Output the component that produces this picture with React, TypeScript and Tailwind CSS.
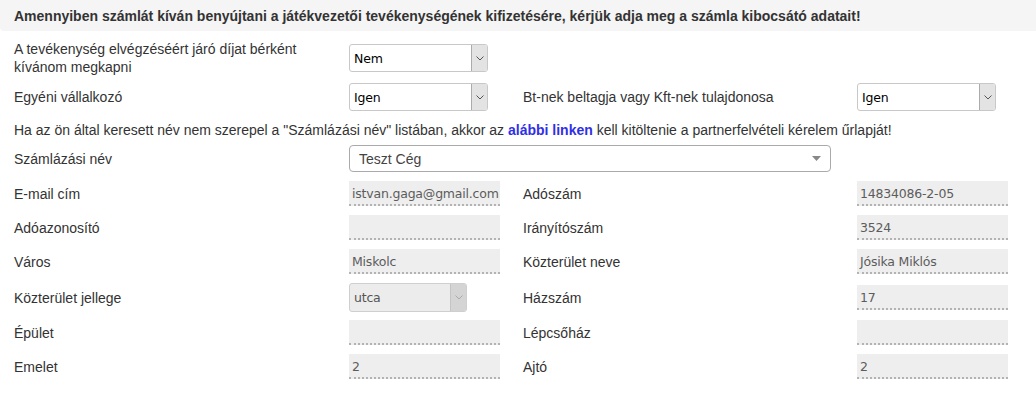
import React from "react";

const GRID = "grid grid-cols-[335px_174px_334px_1fr] items-center";

function Chevron({ color = "#555" }: { color?: string }) {
  return (
    <svg width="8" height="5" viewBox="0 0 8 5" fill="none">
      <path d="M0.5 0.5 L4 4 L7.5 0.5" stroke={color} strokeWidth="1" />
    </svg>
  );
}

function Sel({ value, w = "w-[139px]" }: { value: string; w?: string }) {
  return (
    <div
      className={`${w} h-[28px] flex items-stretch bg-white border border-[#c8c8c8] rounded-[3px] overflow-hidden`}
    >
      <div className="flex-1 flex items-center pl-[4px] pt-[1px] text-[12.5px] text-black font-['DejaVu_Sans',sans-serif] tracking-[-0.2px]">
        {value}
      </div>
      <div className="w-[16px] flex items-center justify-center bg-[#e3e3e3] border-l border-[#ababab]">
        <Chevron />
      </div>
    </div>
  );
}

function DisabledSel({ value }: { value: string }) {
  return (
    <div className="w-[118px] h-[29px] flex items-stretch bg-[#ececec] border border-[#cfcfcf] rounded-[3px] overflow-hidden">
      <div className="flex-1 flex items-center pl-[4px] pt-[1px] text-[12.5px] text-[#555] font-['DejaVu_Sans',sans-serif] tracking-[-0.2px]">
        {value}
      </div>
      <div className="w-[16px] flex items-center justify-center bg-[#d4d4d4] border-l border-[#c4c4c4]">
        <Chevron color="#aaa" />
      </div>
    </div>
  );
}

function RO({ value }: { value?: string }) {
  return (
    <div className="w-[151px] h-[25px] bg-[#eeeeee] border-b-2 border-dotted border-[#b3b3b3] flex items-center pl-[3px] pt-[2px] text-[12.5px] tracking-[-0.2px] text-[#5c5c5c] font-['DejaVu_Sans',sans-serif] whitespace-nowrap overflow-hidden">
      {value}
    </div>
  );
}

function Row({
  l1,
  v1,
  l2,
  v2,
  mt = "mt-[9px]",
  h = "h-[25px]",
}: {
  l1: string;
  v1: React.ReactNode;
  l2: string;
  v2: React.ReactNode;
  mt?: string;
  h?: string;
}) {
  return (
    <div className={`${GRID} ${mt} ${h}`}>
      <div>{l1}</div>
      <div>{v1}</div>
      <div>{l2}</div>
      <div>{v2}</div>
    </div>
  );
}

export default function App() {
  return (
    <div className="w-[1036px] h-[410px] bg-white font-['Liberation_Sans',Arial,sans-serif] text-[14px] text-[#333] leading-[18px]">
      <div className="h-[31px] bg-[#f5f5f5] rounded-bl-[4px] flex items-center pl-[14px] pt-[1px] font-bold">
        Amennyiben számlát kíván benyújtani a játékvezetői tevékenységének kifizetésére, kérjük adja meg a számla kibocsátó adatait!
      </div>
      <div className="pl-[14px]">
        <div className={`${GRID} mt-[9px] h-[36px]`}>
          <div className="leading-[18px]">
            A tevékenység elvégzéséért járó díjat bérként
            <br />
            kívánom megkapni
          </div>
          <div>
            <Sel value="Nem" />
          </div>
          <div />
          <div />
        </div>
        <div className={`${GRID} mt-[7px] h-[28px]`}>
          <div>Egyéni vállalkozó</div>
          <div>
            <Sel value="Igen" />
          </div>
          <div>Bt-nek beltagja vagy Kft-nek tulajdonosa</div>
          <div>
            <Sel value="Igen" />
          </div>
        </div>
        <div className="mt-[10px] h-[18px] whitespace-nowrap">
          Ha az ön által keresett név nem szerepel a "Számlázási név" listában, akkor az{" "}
          <span className="font-bold text-[#2f2fe6]">alábbi linken</span> kell kitöltenie a
          partnerfelvételi kérelem űrlapját!
        </div>
        <div className="grid grid-cols-[335px_1fr] items-center mt-[6px] h-[27px]">
          <div>Számlázási név</div>
          <div className="w-[482px] h-[27px] bg-white border border-[#aaa] rounded-[4px] flex items-center pl-[9px] pr-[9px] text-[#444]">
            <span className="flex-1">Teszt Cég</span>
            <svg width="9" height="5" viewBox="0 0 9 5">
              <path d="M0 0 H9 L4.5 5 Z" fill="#888" />
            </svg>
          </div>
        </div>
        <Row l1="E-mail cím" v1={<RO value="istvan.gaga@gmail.com" />} l2="Adószám" v2={<RO value="14834086-2-05" />} />
        <Row l1="Adóazonosító" v1={<RO />} l2="Irányítószám" v2={<RO value="3524" />} />
        <Row l1="Város" v1={<RO value="Miskolc" />} l2="Közterület neve" v2={<RO value="Jósika Miklós" />} />
        <Row l1="Közterület jellege" v1={<DisabledSel value="utca" />} l2="Házszám" v2={<RO value="17" />} h="h-[29px]" />
        <Row l1="Épület" v1={<RO />} l2="Lépcsőház" v2={<RO />} mt="mt-[8px]" />
        <Row l1="Emelet" v1={<RO value="2" />} l2="Ajtó" v2={<RO value="2" />} />
      </div>
    </div>
  );
}
